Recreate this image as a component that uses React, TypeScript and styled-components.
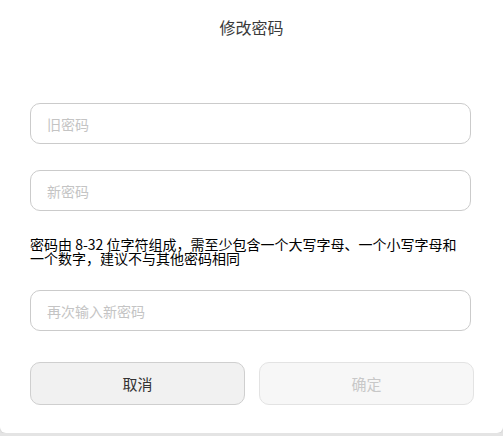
import styled, { createGlobalStyle } from "styled-components";

const GlobalStyle = createGlobalStyle`
  html, body {
    margin: 0;
    padding: 0;
    background: #e4e4e4;
  }
  body {
    font-family: "Noto Sans CJK SC", "Liberation Sans", sans-serif;
  }
`;

const App = () => {
  return (
    <>
      <GlobalStyle />
      <Dialog>
        <Title>修改密码</Title>
        <Form>
          <Field type="password" placeholder="旧密码" />
          <Field type="password" placeholder="新密码" />
          <Hint>
            密码由 8-32 位字符组成，需至少包含一个大写字母、一个小写字母和一个数字，建议不与其他密码相同
          </Hint>
          <Field type="password" placeholder="再次输入新密码" $gap={25} />
          <Actions>
            <Button type="button">取消</Button>
            <Button type="button" $primary disabled>
              确定
            </Button>
          </Actions>
        </Form>
      </Dialog>
    </>
  );
};

export default App;

// ------ component styles ------
const Dialog = styled.div`
  width: 503px;
  height: 433px;
  box-sizing: border-box;
  background: #ffffff;
  border-radius: 0 0 6px 6px;
  box-shadow: 0 1px 2px rgba(0, 0, 0, 0.08);
`;

const Title = styled.h1`
  margin: 0;
  padding-top: 17px;
  font-size: 16px;
  font-weight: 400;
  line-height: 20px;
  text-align: center;
  color: #3a3a3a;
`;

const Form = styled.div`
  display: flex;
  flex-direction: column;
  padding: 66px 32px 0 30px;
`;

const Field = styled.input<{ $gap?: number }>`
  box-sizing: border-box;
  height: 41px;
  width: 100%;
  margin: 0 0 ${(p) => p.$gap ?? 26}px;
  padding: 0 16px;
  border: 1px solid #cbcbcb;
  border-radius: 10px;
  background: #fff;
  font-family: inherit;
  font-size: 14px;
  color: #333;
  outline: none;

  &::placeholder {
    color: #c4c4c4;
  }
`;

const Hint = styled.p`
  max-width: 434px;
  margin: 0 0 25px;
  font-size: 14px;
  line-height: 14px;
  color: #000;
`;

const Actions = styled.div`
  display: grid;
  grid-template-columns: 215px 215px;
  column-gap: 14px;
  margin-top: 6px;
`;

const Button = styled.button<{ $primary?: boolean }>`
  box-sizing: border-box;
  height: 43px;
  border-radius: 10px;
  border: 1px solid ${(p) => (p.$primary ? "#e3e3e3" : "#cfcfcf")};
  background: ${(p) => (p.$primary ? "#f7f7f7" : "#f1f1f1")};
  color: ${(p) => (p.$primary ? "#c8c8c8" : "#333")};
  font-family: inherit;
  font-size: 15px;
  cursor: pointer;
`;
